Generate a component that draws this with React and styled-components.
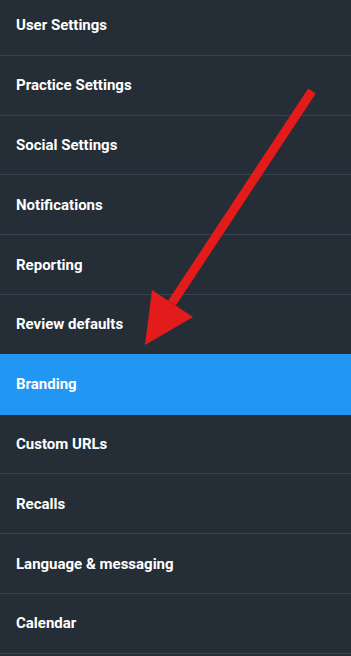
import React from "react";
import styled, { createGlobalStyle } from "styled-components";

const Global = createGlobalStyle`
  html, body { margin: 0; padding: 0; background: #252e37; }
  body { font-family: Roboto, "Liberation Sans", Arial, sans-serif; overflow: hidden; }
`;

const Page = styled.div`
  position: relative;
  width: 351px;
  height: 656px;
  overflow: hidden;
  background: #252e37;
`;

const Menu = styled.nav`
  display: flex;
  flex-direction: column;
  margin-top: -4px;
`;

const Item = styled.div`
  display: flex;
  align-items: center;
  padding-left: 16px;
  border-bottom: 1px solid ${(p) => (p.$active ? "#2196f3" : "#3a434d")};
  background: ${(p) => (p.$active ? "#2196f3" : "transparent")};
  margin-top: ${(p) => (p.$active ? "-1px" : "0")};
  height: ${(p) => (p.$active ? "59.8px" : "58.8px")};
  color: #ffffff;
  font-size: 15px;
  font-weight: 700;
  letter-spacing: 0;
`;

const Arrow = styled.svg`
  position: absolute;
  left: 0;
  top: 0;
  pointer-events: none;
`;

const items = [
  "User Settings",
  "Practice Settings",
  "Social Settings",
  "Notifications",
  "Reporting",
  "Review defaults",
  "Branding",
  "Custom URLs",
  "Recalls",
  "Language & messaging",
  "Calendar",
];

export default function App() {
  return (
    <Page>
      <Global />
      <Menu>
        {items.map((t) => (
          <Item key={t} $active={t === "Branding"}>
            {t}
          </Item>
        ))}
      </Menu>
      <Arrow width="351" height="656" viewBox="0 0 351 656">
        <polygon points="308.2,88.5 315.8,93.5 175.8,305.5 168.2,300.5" fill="#e31b1b" />
        <polygon points="152,290 193,317 145,345" fill="#e31b1b" />
      </Arrow>
    </Page>
  );
}
